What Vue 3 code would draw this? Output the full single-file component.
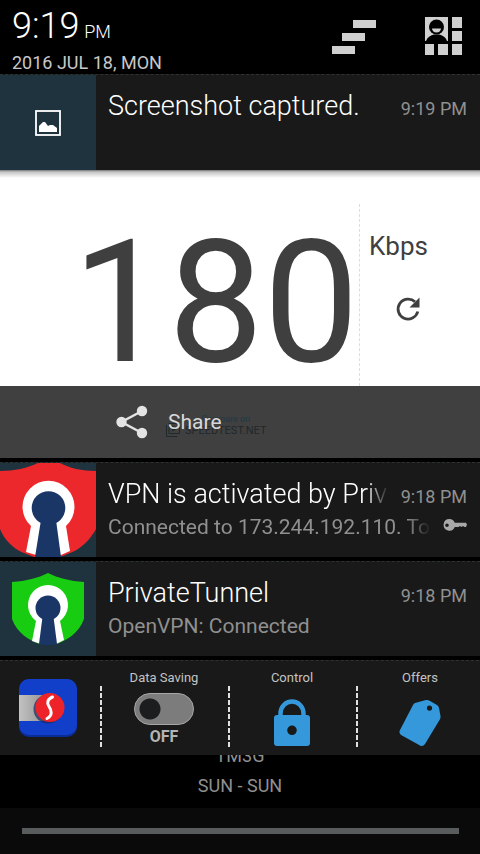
<script setup>
import { ref } from 'vue'

const saving = ref(false)

const notices = [
  {
    id: 'vpn',
    title: 'VPN is activated by PrivateTunnel',
    text: 'Connected to 173.244.192.110. Touch to manage',
    time: '9:18 PM',
    key: true,
  },
  {
    id: 'tunnel',
    title: 'PrivateTunnel',
    text: 'OpenVPN: Connected',
    time: '9:18 PM',
    key: false,
  },
]
</script>

<template>
  <main class="shade">
    <header class="head">
      <div class="clock">
        <div class="time">9:19 <span class="ampm">PM</span></div>
        <div class="date">2016 JUL 18, MON</div>
      </div>
      <div class="head-actions">
        <button class="icon-btn" type="button" aria-label="Clear all">
          <svg width="48" height="40" viewBox="0 0 48 40" fill="#d0d0d0">
            <path d="M21 4h23v8H21zM10 17h23v8H10zM0 30h23v8H0z" />
          </svg>
        </button>
        <button class="icon-btn" type="button" aria-label="Quick settings">
          <svg width="38" height="40" viewBox="0 0 38 40">
            <path fill="#d0d0d0" d="M1 1h23v24H1zM28 1h10v11H28zM28 15h10v10H28zM1 28h9v11H1zM14 28h10v11H14zM28 28h10v11H28z" />
            <path d="M2 25c1.500-4 5-6 8-6.500h5c3 .5 6.500 2.500 8 6.500z" />
            <circle cx="12.500" cy="11" r="7.500" />
            <path fill="#d0d0d0" d="M8 12.500h9a4.500 4 0 0 1-9 0z" />
          </svg>
        </button>
      </div>
    </header>

    <section class="list">
      <article class="shot">
        <div class="card">
          <div class="thumb">
            <svg width="26" height="26" viewBox="0 0 26 26">
              <rect x="1" y="1" width="24" height="24" fill="none" stroke="#fff" stroke-width="1.800" />
              <path fill="#fff" d="M4 22v-6l4-4h2l3 4 2-1h3l4 3v4z" />
            </svg>
          </div>
          <div class="body">
            <div class="line">
              <h2 class="title">Screenshot captured.</h2>
              <time class="when">9:19 PM</time>
            </div>
          </div>
        </div>

        <div class="preview">
          <div class="speed">180</div>
          <div class="unit-col">
            <span class="unit">Kbps</span>
            <svg class="reload" width="26" height="26" viewBox="0 0 26 26">
              <path fill="none" stroke="#3f3f3f" stroke-width="2.800" d="M22.800 15.500A10 10 0 1 1 20 5.800" />
              <path fill="#3f3f3f" d="M24.500 1.500v10H14.500z" />
            </svg>
          </div>
        </div>

        <div class="share">
          <div class="ghost">
            <svg width="16" height="16" viewBox="0 0 16 16" fill="none" stroke="#20282b">
              <path d="M1.500 3v11.500h11" />
              <path d="M4 1.500h10.500v10H4z" />
              <path fill="#20282b" d="M7.500 4v5l4-2.500z" />
            </svg>
            <div class="ghost-text">
              <span class="ghost-small">Compare on</span>
              <span class="ghost-big">SPEEDTEST.NET</span>
            </div>
          </div>
          <button class="share-btn" type="button">
            <svg width="32" height="34" viewBox="0 0 32 34" fill="#e4e4e4">
              <path fill="none" stroke="#e4e4e4" stroke-width="2.500" d="M26 6L5.500 17 26 28" />
              <circle cx="26" cy="6" r="5.200" />
              <circle cx="5.500" cy="17" r="5.200" />
              <circle cx="26" cy="28" r="5.200" />
            </svg>
            <span>Share</span>
          </button>
        </div>
      </article>

      <article v-for="n in notices" :key="n.id" class="card">
        <div class="thumb">
          <svg v-if="n.id === 'vpn'" width="96" height="94" viewBox="0 0 96 94">
            <path fill="#ed282c" d="M0 8C14 8 28 5 38 0h22c9 5 22 8 36 8v58c-5 9-13 19-26 24l-10 4H34l-10-4C13 86 4 76 0 66z" />
            <path fill="#fff" d="M26 89l5-26a26 26 0 1 1 35 0l4 25-9 4H36z" />
            <circle cx="48.500" cy="45" r="16.800" fill="#1a3667" />
            <path fill="#1a3667" d="M41 57h15l5 37H35z" />
          </svg>
          <svg v-else width="74" height="72" viewBox="0 0 74 72">
            <path fill="#18cc12" d="M1 9C15 8 27 5 37 0c10 5 22 8 36 9v37C68 60 55 68 45 71H29C19 68 6 60 1 46z" />
            <path fill="#fff" d="M21 68l4-20a20 20 0 1 1 24 0l4 19-8 4H30z" />
            <circle cx="37" cy="35" r="12.500" fill="#1a3667" />
            <path fill="#1a3667" d="M31.500 44h11L46 71q-9 2-18 0z" />
          </svg>
        </div>
        <div class="body">
          <div class="line">
            <h2 class="title" :class="{ fade: n.key }">{{ n.title }}</h2>
            <time class="when">{{ n.time }}</time>
          </div>
          <div class="line sub">
            <p class="text" :class="{ fade: n.key }">{{ n.text }}</p>
            <svg v-if="n.key" class="key" width="24" height="14" viewBox="0 0 24 14">
              <path fill="#a8a8a8" fill-rule="evenodd" d="M6.500 1c2.500 0 4.500 1.500 5.300 3.800H23L24 6.500 23 9h-1.500L20 8l-1.500 1L17 8l-1.500 1h-3.700A5.800 5.800 0 1 1 6.500 1zM4 5.500a1.800 1.800 0 1 0 0 3.600 1.800 1.800 0 0 0 0-3.600z" />
            </svg>
          </div>
        </div>
      </article>

      <article class="tray">
        <a class="app" href="#" aria-label="Open data saver">
          <svg width="58" height="58" viewBox="0 0 58 58">
            <defs>
              <linearGradient id="steel" x1="0" x2="1">
                <stop offset="0" stop-color="#c2c2c2" />
                <stop offset="1" stop-color="#8c8c8c" />
              </linearGradient>
            </defs>
            <rect width="58" height="58" rx="10" fill="#0a2c96" />
            <rect width="58" height="56" rx="10" fill="#123fca" />
            <path fill="url(#steel)" d="M0 16h30v26H0z" />
            <circle cx="29" cy="30" r="14.500" fill="#1a2a60" opacity=".7" />
            <circle cx="31" cy="28.500" r="14.500" fill="#ee2229" />
            <path fill="none" stroke="#fff" stroke-width="3" stroke-linecap="round" d="M33.500 18c-5 2-6 6-3.500 9.500s4 9-2 12" />
          </svg>
        </a>
        <div class="cell">
          <label class="cell-name" for="saving">Data Saving</label>
          <input id="saving" v-model="saving" class="toggle" type="checkbox" />
          <span class="state">{{ saving ? 'ON' : 'OFF' }}</span>
        </div>
        <a class="cell" href="#">
          <span class="cell-name">Control</span>
          <svg class="glyph" width="38" height="48" viewBox="0 0 38 48">
            <path fill="none" stroke="#3498db" stroke-width="4.500" d="M7.500 20v-5.500a11.500 12 0 0 1 23 0V20" />
            <path fill="#3498db" fill-rule="evenodd" d="M4 16h30a3 3 0 0 1 3 3V44a3 3 0 0 1-3 3H4a3 3 0 0 1-3-3V19a3 3 0 0 1 3-3zm15 10.500a4.800 4.800 0 1 0 0 9.600 4.800 4.800 0 0 0 0-9.600z" />
          </svg>
        </a>
        <a class="cell" href="#">
          <span class="cell-name">Offers</span>
          <svg class="glyph" width="42" height="48" viewBox="0 0 42 48">
            <path fill="#3498db" fill-rule="evenodd" d="M16 4l11-3q2-.5 4 1l7 4q1.500 1 2 3l1.500 8q.3 2-1 4L26 45q-2 3-5 1.500L2 36q-2.500-2-1-5L14 6q.7-1.500 2-2zm14.500 2.500a2.600 2.600 0 1 0 0 5.200 2.600 2.600 0 0 0 0-5.200z" />
          </svg>
        </a>
      </article>
    </section>

    <section class="network">
      <span>TM3G</span>
      <span>SUN - SUN</span>
    </section>
    <footer class="foot"><div class="handle"></div></footer>
  </main>
</template>

<style>
body {
  background: #000;
}
</style>

<style scoped>
.shade {
  display: flex;
  flex-direction: column;
  min-height: 100vh;
  overflow: hidden;
  background: #000;
  color: #fff;
  font-family: Roboto, "Noto Sans", sans-serif;
}
button {
  border: 0;
  padding: 0;
  background: none;
  color: inherit;
  font: inherit;
}
a {
  color: inherit;
  text-decoration: none;
}
svg {
  display: block;
  flex: none;
}
.head {
  display: flex;
  justify-content: space-between;
  height: 74px;
  padding: 0 18px 0 12px;
  box-sizing: border-box;
}
.time {
  padding-top: 6px;
  font-size: 36px;
  font-weight: 300;
  line-height: 40px;
}
.ampm {
  margin-left: -4px;
  font-size: 18px;
}
.date {
  padding-top: 6px;
  font-size: 18px;
  line-height: 22px;
  color: #c8c8c8;
}
.time,
.date {
  box-sizing: border-box;
}
.clock {
  display: grid;
  grid-template-rows: 46px 28px;
}
.date {
  padding-top: 6px;
}
.head-actions {
  display: flex;
  gap: 44px;
  align-items: flex-start;
  padding-top: 16px;
}
.list {
  display: flex;
  flex-direction: column;
  gap: 4px;
}
.card {
  display: grid;
  grid-template-columns: 96px minmax(0, 1fr);
  height: 95px;
  box-sizing: border-box;
  border-top: 1px dashed #2d3333;
  background: #191919;
}
.shot .card {
  height: 96px;
}
.thumb {
  display: flex;
  align-items: center;
  justify-content: center;
  overflow: hidden;
  background: #1f333f;
}
.body {
  padding: 14px 13px 0 12px;
}
.line {
  display: flex;
  justify-content: space-between;
  align-items: baseline;
  gap: 12px;
}
.title,
.text {
  margin: 0;
  min-width: 0;
  overflow: hidden;
  white-space: nowrap;
}
.title {
  font-size: 27px;
  font-weight: 300;
  line-height: 34px;
}
.when {
  flex: none;
  font-size: 18px;
  color: #909090;
}
.sub {
  align-items: flex-start;
  margin-top: 4px;
}
.text {
  font-size: 21px;
  line-height: 24px;
  color: #909090;
}
.key {
  margin-top: 3px;
}
.fade {
  mask-image: linear-gradient(to left, transparent, #000 24px);
}
.preview {
  display: flex;
  align-items: stretch;
  height: 216px;
  box-sizing: border-box;
  padding-top: 34px;
  background: linear-gradient(#777 0, #c4c4c4 2px, #fff 8px);
  color: #3f3f3f;
}
.speed {
  flex: 1;
  height: 182px;
  text-align: right;
  font-size: 170px;
  line-height: 198px;
}
.unit-col {
  flex: 0 0 121px;
  box-sizing: border-box;
  border-left: 1px dashed #ddd;
  padding: 26px 0 0 9px;
}
.unit {
  display: block;
  font-size: 26px;
  line-height: 32px;
}
.reload {
  margin: 34px 0 0 26px;
}
.share {
  display: grid;
  align-items: center;
  height: 72px;
  background: #404040;
}
.share > * {
  grid-area: 1 / 1;
}
.ghost {
  display: flex;
  align-items: flex-end;
  gap: 4px;
  padding: 8px 0 0 165px;
  color: #20282b;
}
.ghost-text {
  display: flex;
  flex-direction: column;
  align-items: center;
}
.ghost-small {
  font-size: 9px;
  line-height: 10px;
  color: #1f3945;
}
.ghost-big {
  font-size: 11px;
  line-height: 14px;
}
.share-btn {
  display: flex;
  align-items: center;
  gap: 20px;
  height: 72px;
  padding-left: 116px;
  font-size: 21px;
  color: #d8d8d8;
}
.tray {
  display: grid;
  grid-template-columns: 100px repeat(3, minmax(0, 1fr));
  height: 95px;
  margin-right: -4px;
  box-sizing: border-box;
  border-top: 1px dashed #2d3333;
  background: #191919;
}
.app {
  padding: 18px 0 0 19px;
}
.cell {
  display: flex;
  flex-direction: column;
  align-items: center;
  padding-top: 9px;
  background: repeating-linear-gradient(#e0e0e0 0 5px, transparent 5px 7px) 0 25px / 2px 61px no-repeat;
}
.cell-name {
  font-size: 13px;
  line-height: 16px;
  color: #c4c4c4;
}
.toggle {
  appearance: none;
  width: 60px;
  height: 32px;
  margin: 7px 0 0;
  border: 1px solid #a6a6a6;
  border-radius: 16px;
  background: radial-gradient(circle at 15px 15px, #1b1d1e 10px, transparent 11px) #7c7c7c;
}
.toggle:checked {
  background: radial-gradient(circle at 43px 15px, #1b1d1e 10px, transparent 11px) #3498db;
}
.state {
  margin-top: 3px;
  font-size: 16px;
  font-weight: 700;
  line-height: 18px;
  color: #b4b4b4;
}
.glyph {
  margin-top: 13px;
}
.network {
  display: flex;
  flex-direction: column;
  justify-content: flex-end;
  align-items: center;
  height: 53px;
  padding-bottom: 7px;
  box-sizing: border-box;
  overflow: hidden;
  font-size: 18px;
  line-height: 30px;
  color: #909090;
}
.foot {
  flex: 1;
  padding: 20px 21px 0 22px;
  background: #090a09;
}
.handle {
  height: 6px;
  background: #585c5c;
}
</style>
